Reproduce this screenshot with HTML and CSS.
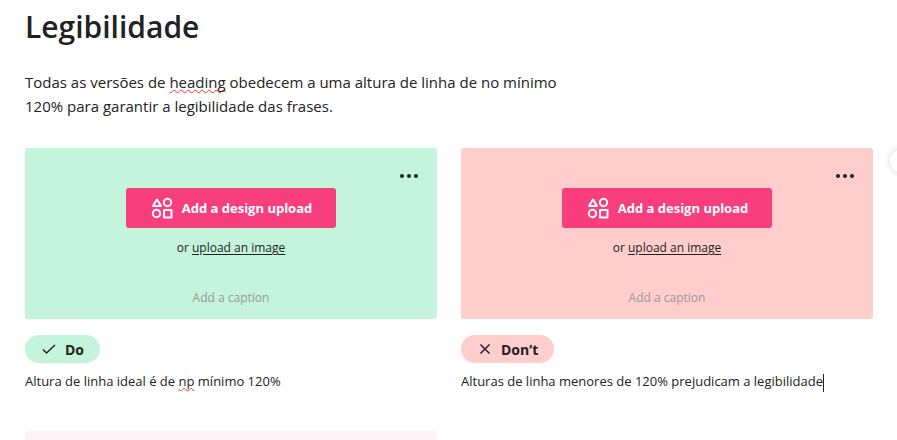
FILE: index.html
```html
<!DOCTYPE html>
<html lang="pt-BR">
<head>
<meta charset="utf-8">
<meta name="viewport" content="width=device-width, initial-scale=1">
<title>Legibilidade</title>
<link rel="stylesheet" href="styles.css">
</head>
<body>
<main class="page">
  <h1 class="title">Legibilidade</h1>
  <p class="intro">Todas as versões de <span class="misspelled">heading</span> obedecem a uma altura de linha de no mínimo 120% para garantir a legibilidade das frases.</p>
  <div class="examples">
    <section class="example example-do">
      <div class="card">
        <button class="more" type="button" aria-label="More options">
          <svg width="20" height="6" viewBox="0 0 20 6" fill="currentColor"><circle cx="3" cy="3" r="2"/><circle cx="10" cy="3" r="2"/><circle cx="17" cy="3" r="2"/></svg>
        </button>
        <button class="upload" type="button">
          <svg width="24" height="24" viewBox="0 0 24 24" fill="none" stroke="currentColor" stroke-width="2" stroke-linejoin="round"><path d="M7 3.500 11 10H3Z"/><circle cx="17.500" cy="6.500" r="3.700"/><circle cx="6.500" cy="17.500" r="3.700"/><rect x="14" y="14" width="7.500" height="7.500"/></svg>
          <span>Add a design upload</span>
        </button>
        <p class="alternative">or <a href="#image">upload an image</a></p>
        <input class="caption" type="text" placeholder="Add a caption" aria-label="Caption">
      </div>
      <h2 class="badge"><svg width="16" height="16" viewBox="0 0 16 16" fill="none" stroke="currentColor" stroke-width="1.500"><path d="M2 8.500 5.500 12 14 4"/></svg>Do</h2>
      <p class="note">Altura de linha ideal é de <span class="misspelled">np</span> mínimo 120%</p>
    </section>
    <section class="example example-dont">
      <div class="card">
        <button class="more" type="button" aria-label="More options">
          <svg width="20" height="6" viewBox="0 0 20 6" fill="currentColor"><circle cx="3" cy="3" r="2"/><circle cx="10" cy="3" r="2"/><circle cx="17" cy="3" r="2"/></svg>
        </button>
        <button class="upload" type="button">
          <svg width="24" height="24" viewBox="0 0 24 24" fill="none" stroke="currentColor" stroke-width="2" stroke-linejoin="round"><path d="M7 3.500 11 10H3Z"/><circle cx="17.500" cy="6.500" r="3.700"/><circle cx="6.500" cy="17.500" r="3.700"/><rect x="14" y="14" width="7.500" height="7.500"/></svg>
          <span>Add a design upload</span>
        </button>
        <p class="alternative">or <a href="#image">upload an image</a></p>
        <input class="caption" type="text" placeholder="Add a caption" aria-label="Caption">
      </div>
      <h2 class="badge"><svg width="16" height="16" viewBox="0 0 16 16" fill="none" stroke="currentColor" stroke-width="1.500"><path d="M3.500 3.500 12.500 12.500M12.500 3.500 3.500 12.500"/></svg>Don’t</h2>
      <p class="note">Alturas de linha menores de 120% prejudicam a legibilidade<span class="caret"></span></p>
    </section>
  </div>
  <div class="next-row"><div class="placeholder"></div></div>
</main>
<button class="edge-button" type="button" aria-label="Add"></button>
</body>
</html>
```
FILE: styles.css
```css
* {
  box-sizing: border-box;
}

body {
  margin: 0;
  overflow-x: hidden;
  background: #fff;
  color: #222;
  font-family: "Segoe UI", "Open Sans", "Noto Sans", sans-serif;
}

h1, h2, p {
  margin: 0;
}

button, input {
  border: 0;
  padding: 0;
  font-family: inherit;
}

.page {
  padding: 4px 24px 0 25px;
}

.title {
  font-size: 30px;
  line-height: 46px;
  font-weight: 600;
}

.intro {
  max-width: 560px;
  margin-top: 20px;
  font-size: 15px;
  line-height: 24px;
}

.misspelled {
  text-decoration: underline wavy #f03030 1px;
  text-decoration-skip-ink: none;
}

.examples, .next-row {
  display: grid;
  grid-template-columns: 1fr 1fr;
  gap: 24px;
}

.examples {
  margin-top: 30px;
}

.example-do {
  --tone: #c5f4dc;
}

.example-dont {
  --tone: #ffcecc;
}

.card {
  display: flex;
  flex-direction: column;
  align-items: center;
  padding: 20px 18px 12px;
  border-radius: 3px;
  background: var(--tone);
}

.more {
  display: flex;
  align-items: center;
  align-self: flex-end;
  height: 16px;
  background: none;
  color: #222;
}

.upload {
  display: flex;
  align-items: center;
  gap: 8px;
  height: 40px;
  margin-top: 4px;
  padding: 0 24px;
  border-radius: 3px;
  background: #f83e7c;
  color: #fff;
  font-size: 13px;
  font-weight: 700;
}

.alternative {
  margin-top: 12px;
  font-size: 12px;
  line-height: 16px;
  font-weight: 500;
}

.alternative a {
  color: inherit;
  text-underline-offset: 2px;
}

.caption {
  width: 100%;
  height: 20px;
  margin-top: 31px;
  background: none;
  font-size: 12px;
  text-align: center;
}

.caption::placeholder {
  color: #999;
}

.badge {
  display: flex;
  align-items: center;
  gap: 8px;
  width: fit-content;
  height: 28px;
  margin-top: 16px;
  padding: 0 16px;
  border-radius: 14px;
  background: var(--tone);
  font-size: 14px;
  font-weight: 700;
}

.note {
  margin-top: 8px;
  font-size: 13px;
  line-height: 20px;
}

.caret {
  display: inline-block;
  width: 1px;
  height: 18px;
  background: #222;
  vertical-align: middle;
}

.next-row {
  margin-top: 39px;
}

.placeholder {
  height: 9px;
  border-radius: 3px 3px 0 0;
  background: #fff2f6;
}

.edge-button {
  position: absolute;
  top: 149px;
  right: -17px;
  width: 24px;
  height: 24px;
  border-radius: 50%;
  background: #fff;
  box-shadow: 0 0 6px rgb(0 0 0 / 18%);
}
```
